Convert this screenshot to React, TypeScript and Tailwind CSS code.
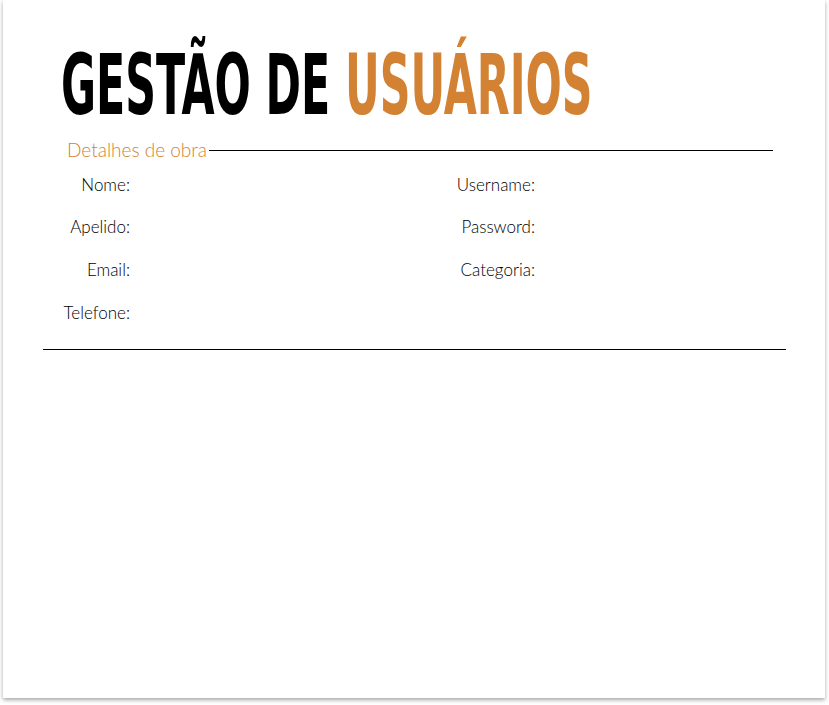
import React from "react";

const leftFields = ["Nome:", "Apelido:", "Email:", "Telefone:"];
const rightFields = ["Username:", "Password:", "Categoria:", ""];

export default function App() {
  return (
    <div className="w-[829px] h-[705px] bg-white overflow-hidden">
      <div className="ml-[3px] w-[822px] h-[698px] bg-white shadow-[0_2px_4px_rgba(0,0,0,0.35)] flex flex-col">
        <h1
          className="ml-[58px] mt-[43px] h-[84px] leading-[84px] text-[84px] font-bold origin-left scale-x-[0.565] whitespace-nowrap text-black"
          style={{ fontFamily: '"DejaVu Sans Condensed", sans-serif' }}
        >
          GESTÃO DE <span className="text-[#d38233]">USUÁRIOS</span>
        </h1>
        <div className="ml-[40px] w-[743px] mt-[11px] border-b border-black pb-[15px]" style={{ fontFamily: "Lato, sans-serif" }}>
          <div className="flex items-center ml-[24px] mr-[13px]">
            <span className="text-[19px] leading-[24px] font-light text-[#d38233]">Detalhes de obra</span>
            <div className="flex-1 h-px bg-black ml-[2px]" />
          </div>
          <div className="grid grid-cols-[87px_305px_100px_1fr] grid-rows-[42px_42px_44px_42px] items-center text-[17px] font-light text-black mt-[2px]">
            {leftFields.map((l, i) => (
              <React.Fragment key={l}>
                <div className="text-right">{l}</div>
                <div />
                <div className="text-right">{rightFields[i]}</div>
                <div />
              </React.Fragment>
            ))}
          </div>
        </div>
      </div>
    </div>
  );
}
